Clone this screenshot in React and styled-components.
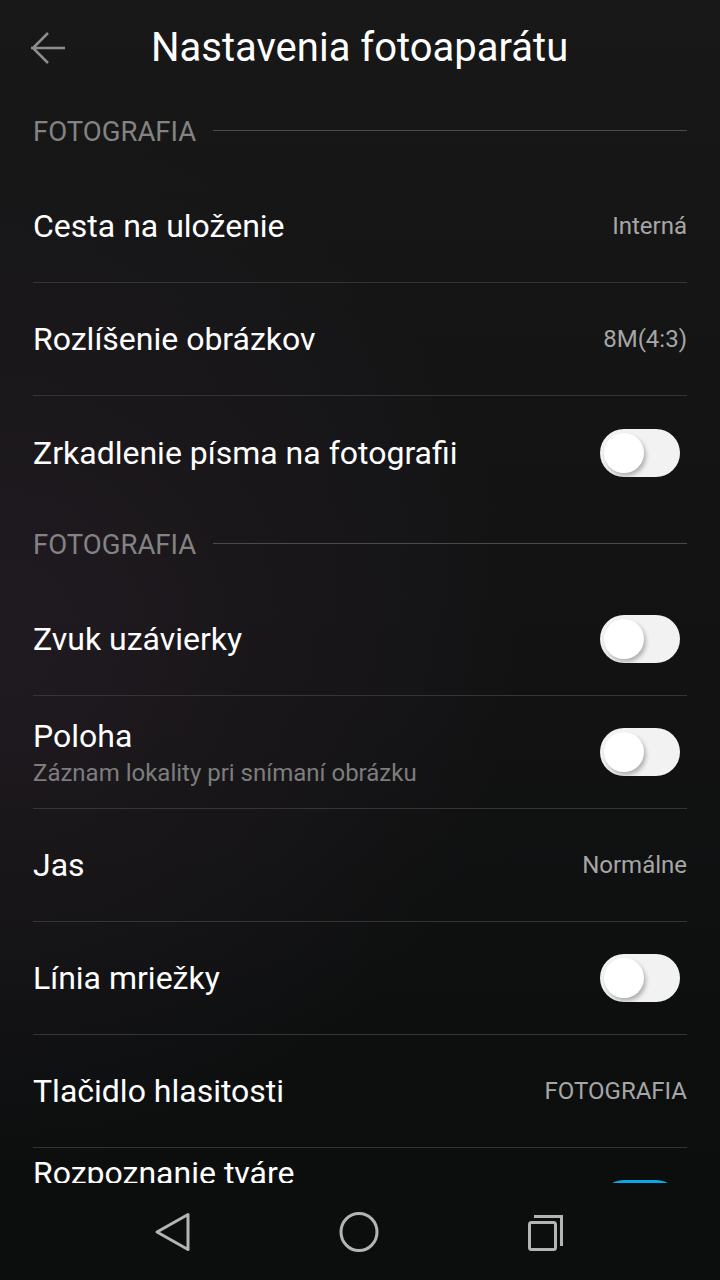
import * as React from "react";
import styled, { createGlobalStyle } from "styled-components";

const GlobalStyle = createGlobalStyle`
    html, body {
        margin: 0;
        padding: 0;
        background: #0c0e0e;
    }
    * {
        box-sizing: border-box;
    }
`;

const Screen = styled.div`
    width: 720px;
    height: 1280px;
    display: flex;
    flex-direction: column;
    overflow: hidden;
    font-family: Roboto, "Noto Sans", sans-serif;
    background:
        radial-gradient(ellipse 520px 520px at 0px 640px, rgba(38, 30, 38, 0.7), rgba(38, 30, 38, 0) 100%),
        linear-gradient(180deg, #181818 0%, #141415 30%, #121213 55%, #0d0f0f 80%, #0c0e0e 100%);
`;

const Header = styled.header`
    height: 96px;
    flex-shrink: 0;
    display: flex;
    align-items: center;
    padding-left: 28px;
`;

const BackButton = styled.div`
    width: 40px;
    height: 40px;
    display: flex;
    align-items: center;
    justify-content: center;
`;

const Title = styled.h1`
    margin: 0 0 0 83px;
    font-size: 40px;
    font-weight: 400;
    color: #ffffff;
    line-height: 1;
`;

const List = styled.div`
    flex: 1;
    overflow: hidden;
    padding: 0 33px;
`;

const SectionHeader = styled.div`
    height: 74px;
    display: flex;
    align-items: center;
    gap: 17px;
    font-size: 27.5px;
    color: #838383;
    padding-bottom: 3px;

    &::after {
        content: "";
        flex: 1;
        height: 1px;
        background: #4a4a4a;
        margin-top: -2px;
    }
`;

const Row = styled.div`
    height: ${(p) => (p.$tall ? "160px" : "113px")};
    display: flex;
    align-items: ${(p) => (p.$tall ? "flex-start" : "center")};
    padding-top: ${(p) => (p.$tall ? "6px" : "0")};
    justify-content: space-between;
    border-bottom: ${(p) => (p.$divider ? "1px solid #353535" : "none")};
`;

const Texts = styled.div`
    display: flex;
    flex-direction: column;
    gap: 3px;
`;

const Label = styled.div`
    font-size: 32px;
    color: #ffffff;
    line-height: 38px;
`;

const Sub = styled.div`
    font-size: 24px;
    color: #7d7d7d;
    line-height: 30px;
`;

const Value = styled.div`
    font-size: 24px;
    color: #a6a6a6;
`;

const Track = styled.div`
    width: 80px;
    height: 48px;
    border-radius: 24px;
    background: ${(p) => (p.$on ? "#0aa8e6" : "#f2f2f2")};
    display: flex;
    align-items: center;
    justify-content: ${(p) => (p.$on ? "flex-end" : "flex-start")};
    padding: 0 4px;
    flex-shrink: 0;
    margin-right: 7px;
    margin-top: ${(p) => p.$offset || 0}px;
`;

const Knob = styled.div`
    width: 40px;
    height: 40px;
    border-radius: 50%;
    background: #ffffff;
    box-shadow: 2px 3px 4px rgba(0, 0, 0, 0.28);
`;

const NavBar = styled.nav`
    height: 97px;
    flex-shrink: 0;
    display: flex;
    align-items: center;
    justify-content: center;
    gap: 126px;
    padding-right: 2px;
    background: #0c0e0e;
`;

const NavButton = styled.div`
    width: 60px;
    height: 60px;
    display: flex;
    align-items: center;
    justify-content: center;
`;

const Toggle = ({ on, offset }) => (
    <Track $on={on} $offset={offset}>
        <Knob />
    </Track>
);

const items = [
    { section: "FOTOGRAFIA" },
    { label: "Cesta na uloženie", value: "Interná", divider: true },
    { label: "Rozlíšenie obrázkov", value: "8M(4:3)", divider: true },
    { label: "Zrkadlenie písma na fotografii", toggle: false },
    { section: "FOTOGRAFIA" },
    { label: "Zvuk uzávierky", toggle: false, divider: true },
    { label: "Poloha", sub: "Záznam lokality pri snímaní obrázku", toggle: false, divider: true },
    { label: "Jas", value: "Normálne", divider: true },
    { label: "Línia mriežky", toggle: false, divider: true },
    { label: "Tlačidlo hlasitosti", value: "FOTOGRAFIA", divider: true },
    { label: "Rozpoznanie tváre", sub: "Automatické zaostrenie na tváre", toggle: true, tall: true },
];

export default function App() {
    return (
        <Screen>
            <GlobalStyle />
            <Header>
                <BackButton>
                    <svg width="40" height="40" viewBox="0 0 40 40">
                        <path d="M3 20 H37 M20 5 L5 20 L20 35" fill="none" stroke="#8c8c8c" strokeWidth="2.6" />
                    </svg>
                </BackButton>
                <Title>Nastavenia fotoaparátu</Title>
            </Header>
            <List>
                {items.map((item, index) => {
                    if (item.section) {
                        return <SectionHeader key={index}>{item.section}</SectionHeader>;
                    }
                    return (
                        <Row key={index} $divider={item.divider} $tall={item.tall}>
                            <Texts>
                                <Label>{item.label}</Label>
                                {item.sub && <Sub>{item.sub}</Sub>}
                            </Texts>
                            {item.value && <Value>{item.value}</Value>}
                            {item.toggle !== undefined && <Toggle on={item.toggle} offset={item.tall ? 26 : 0} />}
                        </Row>
                    );
                })}
            </List>
            <NavBar>
                <NavButton>
                    <svg width="60" height="60" viewBox="0 0 60 60">
                        <path d="M14 30 L45 12.5 V47.5 Z" fill="none" stroke="#b4b4b4" strokeWidth="3" strokeLinejoin="round" />
                    </svg>
                </NavButton>
                <NavButton>
                    <svg width="60" height="60" viewBox="0 0 60 60">
                        <ellipse cx="30" cy="30" rx="18" ry="18.5" fill="none" stroke="#b4b4b4" strokeWidth="3" />
                    </svg>
                </NavButton>
                <NavButton>
                    <svg width="60" height="60" viewBox="0 0 60 60">
                        <rect x="14.5" y="20.5" width="26" height="27" rx="2" fill="none" stroke="#b4b4b4" strokeWidth="3" />
                        <path d="M19 14.5 H46.5 V44" fill="none" stroke="#b4b4b4" strokeWidth="3" />
                    </svg>
                </NavButton>
            </NavBar>
        </Screen>
    );
}
